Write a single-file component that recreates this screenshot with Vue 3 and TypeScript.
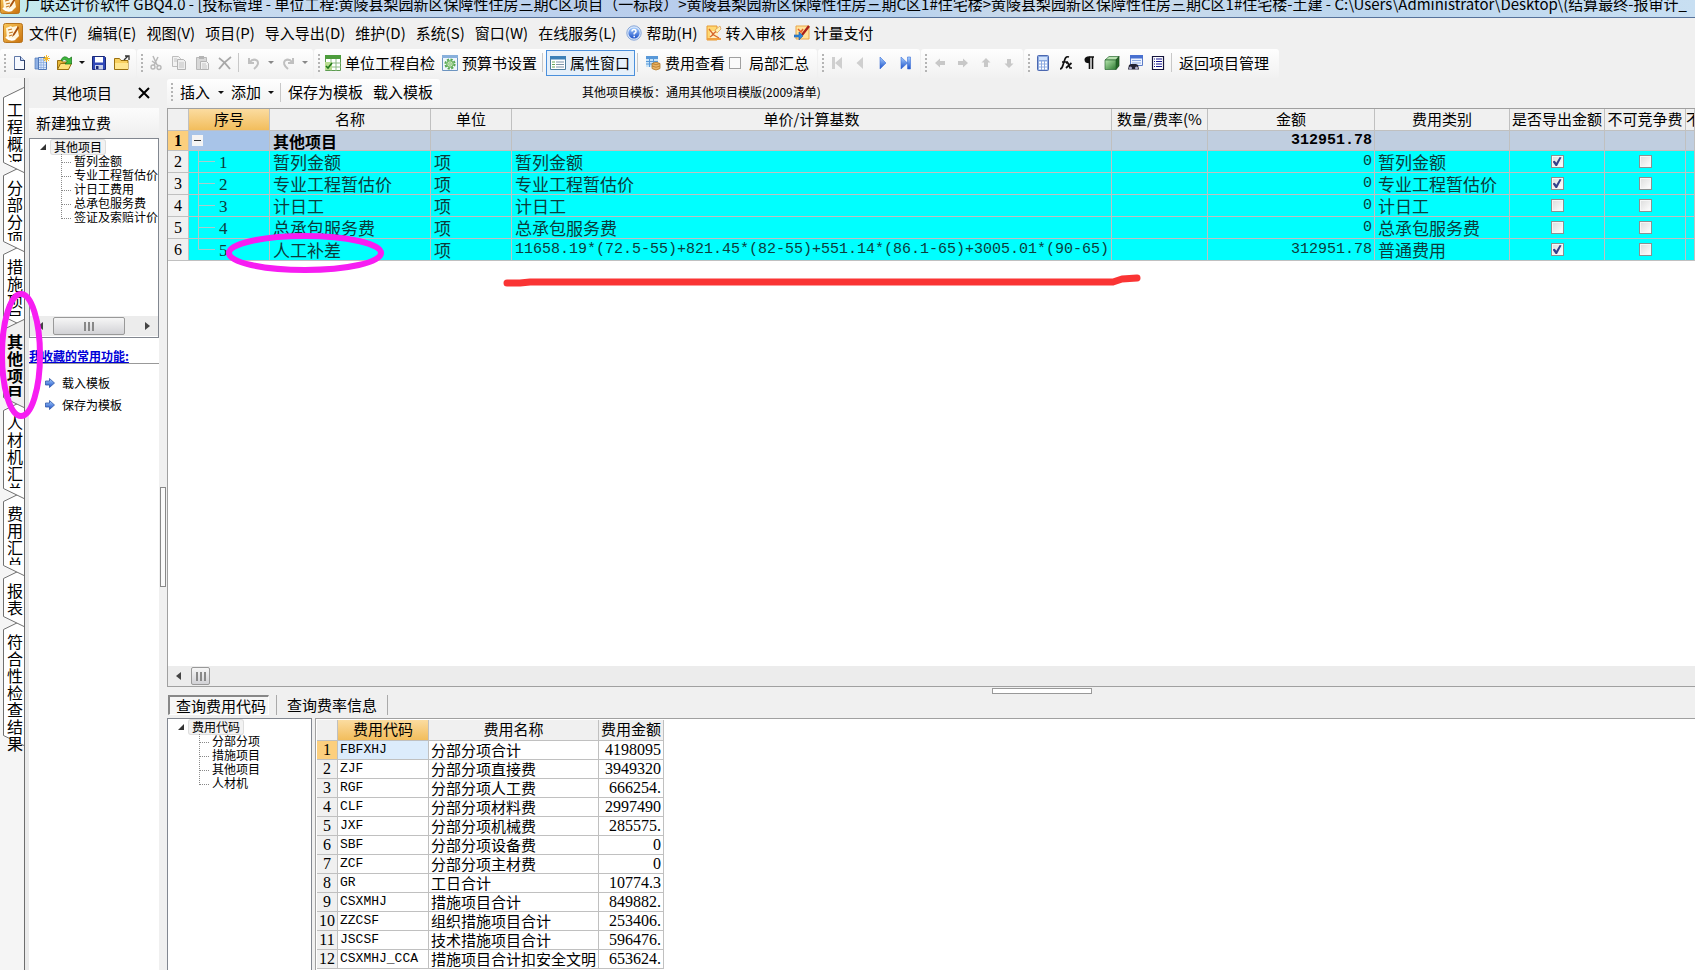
<script setup lang="ts">
import { reactive } from 'vue'

interface Tool { icon?: string; label?: string; kind?: 'sep' | 'caret' | 'check' | 'pressed'; name?: string; off?: boolean }
interface FeeRow { no: string; name: string; base: string; amount: string; type: string; exported: boolean; fixed: boolean }

const menus: { label: string; icon?: string }[] = [
  { label: '文件(F)' }, { label: '编辑(E)' }, { label: '视图(V)' }, { label: '项目(P)' },
  { label: '导入导出(D)' }, { label: '维护(D)' }, { label: '系统(S)' }, { label: '窗口(W)' },
  { label: '在线服务(L)' }, { label: '帮助(H)', icon: 'i-help' },
  { label: '转入审核', icon: 'i-audit' }, { label: '计量支付', icon: 'i-pay' },
]

const groups: Tool[][] = [
  [
    { icon: 'i-new', name: '新建' }, { icon: 'i-sheets', name: '新建工程' }, { icon: 'i-open', name: '打开' },
    { kind: 'caret', name: '最近文件' }, { icon: 'i-save', name: '保存' }, { icon: 'i-folder', name: '关闭' },
  ],
  [
    { icon: 'i-cut', name: '剪切', off: true }, { icon: 'i-copy', name: '复制', off: true },
    { icon: 'i-paste', name: '粘贴', off: true }, { icon: 'i-del', name: '删除', off: true }, { kind: 'sep' },
    { icon: 'i-undo', name: '撤销', off: true }, { kind: 'caret', name: '撤销列表', off: true },
    { icon: 'i-redo', name: '恢复', off: true }, { kind: 'caret', name: '恢复列表', off: true },
  ],
  [
    { icon: 'i-selfcheck', label: '单位工程自检' }, { icon: 'i-setting', label: '预算书设置' }, { kind: 'sep' },
    { icon: 'i-props', label: '属性窗口', kind: 'pressed' }, { kind: 'sep' },
    { icon: 'i-fee', label: '费用查看' }, { kind: 'check', label: '局部汇总' },
  ],
  [
    { icon: 'i-first', name: '首条', off: true }, { icon: 'i-prev', name: '上一条', off: true },
    { icon: 'i-next', name: '下一条' }, { icon: 'i-last', name: '末条' },
  ],
  [
    { icon: 'i-left', name: '左移', off: true }, { icon: 'i-right', name: '右移', off: true },
    { icon: 'i-up', name: '上移', off: true }, { icon: 'i-down', name: '下移', off: true },
  ],
  [
    { icon: 'i-calc', name: '计算器' }, { icon: 'i-fx', name: '函数' }, { icon: 'i-para', name: '特殊符号' },
    { icon: 'i-cube', name: '图元' }, { icon: 'i-find', name: '查找' }, { icon: 'i-list', name: '列表' },
    { kind: 'sep' }, { label: '返回项目管理' },
  ],
]

const rail = [
  { text: '工程概况', h: 86 }, { text: '分部分项', h: 87 }, { text: '措施项目', h: 83 },
  { text: '其他项目', h: 89, active: true }, { text: '人材机汇总', h: 99 }, { text: '费用汇总', h: 85 },
  { text: '报表', h: 59 }, { text: '符合性检查结果', h: 127, open: true },
]
const tabPath = (h: number) => `M24 .5L3.5 10.5V${h - 10.5}L24 ${h - 0.5}`

const sideTree = ['暂列金额', '专业工程暂估价', '计日工费用', '总承包服务费', '签证及索赔计价']
const codeTree = ['分部分项', '措施项目', '其他项目', '人材机']
const favourites = ['载入模板', '保存为模板']

const rows = reactive<FeeRow[]>([
  { no: '1', name: '暂列金额', base: '暂列金额', amount: '0', type: '暂列金额', exported: true, fixed: false },
  { no: '2', name: '专业工程暂估价', base: '专业工程暂估价', amount: '0', type: '专业工程暂估价', exported: true, fixed: false },
  { no: '3', name: '计日工', base: '计日工', amount: '0', type: '计日工', exported: false, fixed: false },
  { no: '4', name: '总承包服务费', base: '总承包服务费', amount: '0', type: '总承包服务费', exported: false, fixed: false },
  { no: '5', name: '人工补差', base: '11658.19*(72.5-55)+821.45*(82-55)+551.14*(86.1-65)+3005.01*(90-65)', amount: '312951.78', type: '普通费用', exported: true, fixed: false },
])

const codes: [string, string, string][] = [
  ['FBFXHJ', '分部分项合计', '4198095'], ['ZJF', '分部分项直接费', '3949320'],
  ['RGF', '分部分项人工费', '666254.'], ['CLF', '分部分项材料费', '2997490'],
  ['JXF', '分部分项机械费', '285575.'], ['SBF', '分部分项设备费', '0'],
  ['ZCF', '分部分项主材费', '0'], ['GR', '工日合计', '10774.3'],
  ['CSXMHJ', '措施项目合计', '849882.'], ['ZZCSF', '组织措施项目合计', '253406.'],
  ['JSCSF', '技术措施项目合计', '596476.'], ['CSXMHJ_CCA', '措施项目合计扣安全文明', '653624.'],
]
</script>

<template>
  <div class="app">
    <svg class="defs" aria-hidden="true">
      <defs>
        <linearGradient id="gold" x2="1" y2="1"><stop offset="0" stop-color="#fbc95a" /><stop offset="1" stop-color="#c8700c" /></linearGradient>
        <linearGradient id="blue" x2="0" y2="1"><stop offset="0" stop-color="#a8d0ff" /><stop offset="1" stop-color="#1c50c8" /></linearGradient>
        <linearGradient id="green" x2="1" y2="1"><stop offset="0" stop-color="#b8e8b0" /><stop offset="1" stop-color="#2c7a30" /></linearGradient>
      </defs>
      <symbol id="i-app" viewBox="0 0 20 20"><rect x=".5" y=".5" width="19" height="19" rx="2" fill="url(#gold)" stroke="#b8741c" /><path d="M3 5l5-2 1 1 5-1 2 10-4 4-8-1z" fill="#fff6dc" /><path d="M5 7l4-1M6 10l4-1M6 13l3-1" fill="none" stroke="#c87820" stroke-width="1.200" /><path d="M15 3L10 11l-1 3 2.500-2L16 5z" fill="#a8500c" /><path d="M3 14q4 4 9 2" fill="none" stroke="#fff" stroke-width="2" /></symbol>
      <symbol id="i-help" viewBox="0 0 16 16"><circle cx="8" cy="8" r="7.2" fill="#d8e6fa" stroke="#8aa8d8" /><circle cx="8" cy="8" r="5.6" fill="url(#blue)" /><path d="M6 6.4Q6 4.4 8 4.4T10 6.4Q10 7.4 8.2 8.4V9.6M8.2 10.8v1.4" fill="none" stroke="#fff" stroke-width="1.5" /></symbol>
      <symbol id="i-audit" viewBox="0 0 16 16"><path d="M1 1h10v14H1z" fill="#ffd873" stroke="#e89a30" /><path d="M1 13h14v2H1z" fill="#f0a040" /><path d="M4 6h8v7H4z" fill="#fff0c0" /><path d="M3 4l4 5 7-6M6 9l7 4M4 12l4-3" fill="none" stroke="#d8682c" stroke-width="1.400" /><path d="M9 5l5-4 1 3-4 4z" fill="#fff0b0" stroke="#d88838" stroke-width=".6" /></symbol>
      <symbol id="i-pay" viewBox="0 0 16 16"><path d="M2 1h13v13H2z" fill="#ffe29a" stroke="#eaa648" /><path d="M4 4l3 3 2-3" fill="none" stroke="#e8602c" stroke-width="1.5" /><path d="M15 1L8 10" stroke="#a82018" stroke-width="2.4" /><path d="M0 10h5V7l4 4-4 4v-3H0z" fill="#2f86d8" stroke="#1c5ca8" stroke-width=".6" /></symbol>
      <symbol id="i-new" viewBox="0 0 16 16"><path d="M3.5 1.5h6l4 4v9h-10z" fill="#f6f9ff" stroke="#6078a8" /><path d="M9.500 1.500v4h4" fill="#c4d4f0" stroke="#3c5488" /><path d="M13.500 5v9.500h-10" fill="none" stroke="#2c3c60" /></symbol>
      <symbol id="i-sheets" viewBox="0 0 16 16"><path d="M1 3h4v11H1z" fill="#8eb0e4" stroke="#5078b8" stroke-width=".7" /><path d="M4.500 2.500h8v12h-8z" fill="#d8e8fc" stroke="#5078b8" /><path d="M5 5h7M5 7.500h7M5 10h7M5 12.500h7M7 3v11M9.500 3v11" stroke="#86a8dc" stroke-width=".7" /><path d="M12.500 0v7M9 3.500h7M10 1l5 5M15 1l-5 5" stroke="#f4b828" stroke-width="1" /></symbol>
      <symbol id="i-open" viewBox="0 0 16 16"><path d="M.500 14.500v-9h4l1 1.500h6v7.500z" fill="#e8b838" stroke="#9a7010" /><path d="M.500 14.500l3-6h11l-3 6z" fill="#ffe27c" stroke="#9a7010" /><path d="M4 5Q7-1 12 4l2.500-2V9H8l2-2.500Q8 3 5 6z" fill="#3cb83c" stroke="#147014" stroke-width=".7" /></symbol>
      <symbol id="i-save" viewBox="0 0 16 16"><path d="M1.500 1.500h12l1 1v12h-13z" fill="#3048b8" stroke="#182878" /><path d="M4 2h8v5.500H4z" fill="#fff" /><path d="M4 10h8v4.500H4z" fill="#c8d0e8" /><path d="M5 11h2.500v3H5z" fill="#182878" /></symbol>
      <symbol id="i-folder" viewBox="0 0 16 16"><path d="M.500 14.500v-11h5l1.500 2h7v9z" fill="#f8d060" stroke="#9a7010" /><path d="M1 8h13v6H1z" fill="#ffe690" /><path d="M10 5l4-4M11 1h4v4" fill="none" stroke="#333" stroke-width="1.300" /></symbol>
      <symbol id="i-cut" viewBox="0 0 16 16"><path d="M5 1l4 9M10 2L6 10M4 6l7 5" fill="none" stroke="#b8b8b8" stroke-width="1.500" /><circle cx="5" cy="12" r="2" fill="none" stroke="#b8b8b8" stroke-width="1.400" /><circle cx="11" cy="12.500" r="2" fill="none" stroke="#b8b8b8" stroke-width="1.400" /></symbol>
      <symbol id="i-copy" viewBox="0 0 16 16"><path d="M1.500 1.500h6l2 2v8h-8z" fill="#f2f2f2" stroke="#bdbdbd" /><path d="M6.500 4.500h6l2 2v8h-8z" fill="#eee" stroke="#b4b4b4" /><path d="M8 8h5M8 10h5M8 12h5M3 4h3M3 6h3" stroke="#c4c4c4" /></symbol>
      <symbol id="i-paste" viewBox="0 0 16 16"><path d="M2.500 2.500h10v12h-10z" fill="#d8d8d8" stroke="#b8b8b8" /><path d="M5 1h5v3H5z" fill="#b4b4b4" /><path d="M6.500 6.500h6l2 2v6h-8z" fill="#f2f2f2" stroke="#b4b4b4" /><path d="M8 9h4M8 11h5M8 13h5" stroke="#c4c4c4" /></symbol>
      <symbol id="i-del" viewBox="0 0 16 16"><path d="M2 3Q8 7 13 14M14 2Q7 7 2 14" fill="none" stroke="#a8a8a8" stroke-width="1.800" /></symbol>
      <symbol id="i-undo" viewBox="0 0 16 16"><path d="M3 3v5h5M3.500 7.500Q7 3 11 5.500Q14 9 8 14" fill="none" stroke="#c0c0c0" stroke-width="2" /></symbol>
      <symbol id="i-redo" viewBox="0 0 16 16"><path d="M13 3v5H8M12.500 7.500Q9 3 5 5.500Q2 9 8 14" fill="none" stroke="#c0c0c0" stroke-width="2" /></symbol>
      <symbol id="i-selfcheck" viewBox="0 0 16 16"><path d="M.500.500h15v15H.500z" fill="#fff" stroke="#5c9c50" /><path d="M0 0h16v4H0z" fill="#4c9c3c" /><path d="M0 8h16M0 12h16M6 4v12M11 4v12" stroke="#8cb884" /><path d="M0 7h7v8H0z" fill="#b8dc90" /><path d="M1 11l2 2 4-5" fill="none" stroke="#207818" stroke-width="1.600" /></symbol>
      <symbol id="i-setting" viewBox="0 0 16 16"><path d="M.500.500h15v15H.500z" fill="#eef6fc" stroke="#6c94c0" /><path d="M0 0h16v3H0z" fill="#88b0dc" /><circle cx="8" cy="9" r="4.600" fill="none" stroke="#58a850" stroke-width="2" stroke-dasharray="2.200 1.400" /><circle cx="8" cy="9" r="3.300" fill="#c8e8b8" stroke="#58a850" /><circle cx="8" cy="9" r="1.200" fill="#fff" stroke="#58a850" stroke-width=".7" /></symbol>
      <symbol id="i-props" viewBox="0 0 16 16"><path d="M.500 1.500h15v13H.500z" fill="#fff" stroke="#4c7c9c" /><path d="M0 1h16v3.500H0z" fill="#3c80b8" /><path d="M2 7h3M2 9.500h3M2 12h3" stroke="#68a858" stroke-width="1.200" /><path d="M6 7h8M6 9.500h8M6 12h8" stroke="#7c94a8" /></symbol>
      <symbol id="i-fee" viewBox="0 0 16 16"><path d="M1 1h12v11H1z" fill="#c8e4f8" /><path d="M1 1h12v3H1z" fill="#5898d8" /><path d="M1 6.500h12M1 9h12M4.500 3v9M8.500 3v9" stroke="#5898d8" /><path d="M7 8.500v5q4 3 8 0v-5q-4-2.500-8 0z" fill="#eab468" /><path d="M7 8.500q4 2.500 8 0q-4-2.500-8 0v5q4 3 8 0v-5M7 11q4 2.500 8 0" fill="none" stroke="#b07828" stroke-width=".8" /></symbol>
      <symbol id="i-first" viewBox="0 0 16 16"><path d="M3 2h3v12H3zM13 2v12L6 8z" fill="#cfcfcf" /></symbol>
      <symbol id="i-prev" viewBox="0 0 16 16"><path d="M11 2v12L4.500 8z" fill="#cfcfcf" /></symbol>
      <symbol id="i-next" viewBox="0 0 16 16"><path d="M5 2v12l6-6z" fill="url(#blue)" stroke="#3c70d8" stroke-width=".6" /></symbol>
      <symbol id="i-last" viewBox="0 0 16 16"><path d="M3 2v12l6.500-6zM9.500 2h3v12h-3z" fill="url(#blue)" stroke="#3c70d8" stroke-width=".6" /></symbol>
      <symbol id="i-left" viewBox="0 0 16 16"><path d="M3 8l5-4.500V6h5v4H8v2.500z" fill="#c8c8c8" /></symbol>
      <symbol id="i-right" viewBox="0 0 16 16"><path d="M13 8L8 3.500V6H3v4h5v2.500z" fill="#c8c8c8" /></symbol>
      <symbol id="i-up" viewBox="0 0 16 16"><path d="M8 3L3.500 7.500H6V12h4V7.500h2.500z" fill="#c8c8c8" /></symbol>
      <symbol id="i-down" viewBox="0 0 16 16"><path d="M8 13L3.500 8.500H6V4h4v4.500h2.500z" fill="#c8c8c8" /></symbol>
      <symbol id="i-calc" viewBox="0 0 16 16"><rect x="2.500" y=".5" width="11" height="15" rx="1" fill="#8caae0" stroke="#4c68b0" /><path d="M4 2h8v3H4z" fill="#d0e2fc" /><path d="M4 7.500h8M4 10.500h8M4 13.500h8" stroke="#fff" stroke-width="1.800" stroke-dasharray="2 1" /></symbol>
      <symbol id="i-fx" viewBox="0 0 16 16"><path d="M2 14q2 0 3-4l2-6q1-3 4-2M4 7h6M8 8l2 0 2 5h2M13.500 8L8 13" fill="none" stroke="#111" stroke-width="1.700" /></symbol>
      <symbol id="i-para" viewBox="0 0 16 16"><path d="M8 2H13M8.500 2v12M11.500 2v12" stroke="#111" stroke-width="1.600" /><path d="M8.500 1.200Q3.500 1.200 3.500 4.800T8.500 8.300z" fill="#111" /></symbol>
      <symbol id="i-cube" viewBox="0 0 16 16"><path d="M1 5l4-3.500h10L12 5z" fill="#b8e0b0" stroke="#286830" stroke-width=".7" /><path d="M12 5l3-3.500V11l-3 3.500z" fill="#246828" stroke="#184818" stroke-width=".7" /><path d="M1 5h11v9.500H1z" fill="url(#green)" stroke="#286830" stroke-width=".7" /></symbol>
      <symbol id="i-find" viewBox="0 0 16 16"><path d="M3.500.500h12v10h-12z" fill="#eef4ff" stroke="#5c7cc8" /><path d="M3 0h13v3.500H3z" fill="#4870d0" /><path d="M5 5.500h9M5 8h9" stroke="#8ca8e0" /><path d="M1 14.500l1-4.500 2-1h5l2 1 1 4.500z" fill="#223" /><circle cx="3.500" cy="13" r="1.500" fill="#aac" /><circle cx="9.500" cy="13" r="1.500" fill="#aac" /></symbol>
      <symbol id="i-list" viewBox="0 0 16 16"><path d="M2.500 1.500h11v13h-11z" fill="#fff" stroke="#14143c" stroke-width="1.200" /><path d="M6 4h6M6 6.500h6M6 9h6M6 11.500h6M4 4h1M4 6.500h1M4 9h1M4 11.500h1" stroke="#14148c" stroke-width="1.200" /></symbol>
      <symbol id="i-go" viewBox="0 0 10 10"><path d="M.500 3h4V.500L9.500 5l-5 4.500V7h-4z" fill="url(#blue)" stroke="#3058a8" stroke-width=".8" /></symbol>
    </svg>

    <header class="title">
      <svg class="logo"><use href="#i-app" /></svg>
      <h1>广联达计价软件 GBQ4.0 - [投标管理 - 单位工程:黄陵县梨园新区保障性住房三期C区项目（一标段）&gt;黄陵县梨园新区保障性住房三期C区1#住宅楼&gt;黄陵县梨园新区保障性住房三期C区1#住宅楼-土建 - C:\Users\Administrator\Desktop\(结算最终-报审计_</h1>
    </header>

    <nav class="menu">
      <svg class="logo"><use href="#i-app" /></svg>
      <button v-for="m in menus" :key="m.label" type="button">
        <svg v-if="m.icon" class="ico"><use :href="'#' + m.icon" /></svg>{{ m.label }}
      </button>
    </nav>

    <div class="bars">
      <div v-for="(g, gi) in groups" :key="gi" class="bar">
        <i class="grip"></i>
        <template v-for="(t, ti) in g" :key="ti">
          <i v-if="t.kind === 'sep'" class="sep"></i>
          <button v-else-if="t.kind === 'caret'" type="button" class="drop" :class="{ off: t.off }" :aria-label="t.name"><i class="caret"></i></button>
          <label v-else-if="t.kind === 'check'" class="partial"><input type="checkbox" />{{ t.label }}</label>
          <button v-else-if="t.label" type="button" class="wide" :class="{ pressed: t.kind === 'pressed' }">
            <svg v-if="t.icon" class="ico"><use :href="'#' + t.icon" /></svg>{{ t.label }}
          </button>
          <button v-else type="button" class="tool" :aria-label="t.name"><svg class="ico"><use :href="'#' + t.icon" /></svg></button>
        </template>
      </div>
    </div>

    <div class="body">
      <nav class="rail">
        <button v-for="(r, i) in rail" :key="r.text" type="button" :class="{ active: r.active, open: r.open }" :style="{ height: r.h + 'px', zIndex: r.active ? 20 : 10 - i }">
          <svg :height="r.h" width="25"><path :d="tabPath(r.h)" /></svg>
          <span>{{ r.text }}</span>
        </button>
      </nav>

      <aside class="side">
        <div class="side-head"><h2>其他项目</h2><button type="button" aria-label="关闭"><svg width="12" height="12"><path d="M1 1l10 10M11 1L1 11" stroke="#000" stroke-width="2" /></svg></button></div>
        <button type="button" class="new-fee">新建独立费</button>
        <div class="side-tree">
          <div class="tree">
            <div class="root"><i class="tri"></i><button type="button">其他项目</button></div>
            <ul><li v-for="s in sideTree" :key="s">{{ s }}</li></ul>
          </div>
          <div class="hscroll">
            <i class="arrow l"></i><i class="thumb"><b></b></i><i class="arrow r"></i>
          </div>
        </div>
        <h3>我收藏的常用功能:</h3>
        <ul class="fav">
          <li v-for="f in favourites" :key="f"><svg><use href="#i-go" /></svg><a href="#">{{ f }}</a></li>
        </ul>
      </aside>

      <div class="vsplit"><i></i></div>

      <main class="content">
        <div class="sub">
          <div class="bar">
            <i class="grip"></i>
            <button type="button" class="text">插入</button><button type="button" class="drop" aria-label="插入选项"><i class="caret"></i></button>
            <button type="button" class="text">添加</button><button type="button" class="drop" aria-label="添加选项"><i class="caret"></i></button>
            <i class="sep"></i>
            <button type="button" class="text">保存为模板</button><button type="button" class="text">载入模板</button>
          </div>
          <p>其他项目模板：通用其他项目模版(2009清单)</p>
        </div>

        <section class="grid">
          <table>
            <colgroup><col class="w-num"><col class="w-seq"><col class="w-name"><col class="w-unit"><col><col class="w-qty"><col class="w-amt"><col class="w-type"><col class="w-exp"><col class="w-fix"><col class="w-tail"></colgroup>
            <thead>
              <tr><th></th><th class="sel">序号</th><th>名称</th><th>单位</th><th>单价/计算基数</th><th>数量/费率(%</th><th>金额</th><th>费用类别</th><th>是否导出金额</th><th>不可竞争费</th><th class="cut">不</th></tr>
            </thead>
            <tbody>
              <tr class="sum">
                <th scope="row">1</th>
                <td class="seq"><button type="button" aria-label="折叠"></button></td>
                <td>其他项目</td><td></td><td></td><td></td><td class="num">312951.78</td><td></td><td></td><td></td><td></td>
              </tr>
              <tr v-for="(r, i) in rows" :key="r.no">
                <th scope="row">{{ i + 2 }}</th>
                <td class="seq"><div><svg width="17" height="22"><path :d="i === rows.length - 1 ? 'M.5 0V10.500H17' : 'M.5 0V22M.5 10.500H17'" /></svg>{{ r.no }}</div></td>
                <td>{{ r.name }}</td><td>项</td>
                <td :class="{ mono: i === 4 }">{{ r.base }}</td><td></td>
                <td class="num">{{ r.amount }}</td><td>{{ r.type }}</td>
                <td class="box"><input v-model="r.exported" type="checkbox" :aria-label="r.name + ' 是否导出金额'" /></td>
                <td class="box"><input v-model="r.fixed" type="checkbox" :aria-label="r.name + ' 不可竞争费'" /></td>
                <td></td>
              </tr>
            </tbody>
          </table>
          <div class="hscroll"><i class="arrow l"></i><i class="thumb"><b></b></i></div>
        </section>

        <div class="hsplit"><i></i></div>

        <div class="tabs"><button type="button" class="on">查询费用代码</button><button type="button">查询费率信息</button></div>

        <section class="lower">
          <div class="tree code-tree">
            <div class="root"><i class="tri"></i><button type="button">费用代码</button></div>
            <ul><li v-for="s in codeTree" :key="s">{{ s }}</li></ul>
          </div>
          <div class="codes">
            <table>
              <colgroup><col class="c-num"><col class="c-code"><col class="c-name"><col class="c-amt"></colgroup>
              <thead><tr><th></th><th class="sel">费用代码</th><th>费用名称</th><th>费用金额</th></tr></thead>
              <tbody>
                <tr v-for="(c, i) in codes" :key="c[0]">
                  <th scope="row">{{ i + 1 }}</th><td class="mono">{{ c[0] }}</td><td>{{ c[1] }}</td><td class="num">{{ c[2] }}</td>
                </tr>
              </tbody>
            </table>
          </div>
        </section>
      </main>
    </div>

    <svg class="marks" aria-hidden="true">
      <ellipse cx="21" cy="355" rx="19" ry="61" stroke="#f71df2" stroke-width="6" />
      <ellipse cx="305" cy="253" rx="76" ry="17" stroke="#f71df2" stroke-width="6" />
      <path d="M507 283L520 283L530 282H1113L1122 279L1137 278" stroke="#fa3434" stroke-width="7" stroke-linecap="round" stroke-linejoin="round" />
    </svg>
  </div>
</template>

<style>
body { margin: 0; overflow: hidden; }
</style>

<style scoped>
* { box-sizing: border-box; }
.app { position: relative; display: flex; flex-direction: column; height: 100vh; overflow: hidden; background: #f0f0f0; color: #000; font: 15px/20px "Noto Sans CJK SC", sans-serif; }
.defs { position: absolute; width: 0; height: 0; }
.marks { position: absolute; inset: 0; width: 100%; height: 100%; fill: none; pointer-events: none; z-index: 50; }
button { margin: 0; padding: 0; border: 0; background: none; color: inherit; font: inherit; white-space: nowrap; }
h1, h2, h3, p, ul { margin: 0; padding: 0; font-weight: 400; list-style: none; }
svg { display: block; flex: none; }
i { font-style: normal; }
.logo { width: 20px; height: 20px; }
.ico { width: 16px; height: 16px; }

.title { flex: none; display: flex; align-items: flex-end; gap: 5px; height: 18px; overflow: hidden; border-bottom: 1px solid #56729a; background: linear-gradient(90deg, #c4ecec 0, #c8dcf0 12%, #b8cdec 40%, #b4d0ee 52%, #cfdcea 62%, #bcd6ee 80%, #c8dff2 100%); }
.title .logo { margin-bottom: 3px; }
.title h1 { height: 25px; font-size: 15px; line-height: 24px; white-space: nowrap; }

.menu { flex: none; display: flex; align-items: center; gap: 10px; height: 31px; padding-left: 3px; padding-bottom: 1px; }
.menu .logo { margin-right: -4px; }
.menu button { display: flex; align-items: center; gap: 4px; }
.menu button:has(.ico) { margin-right: -2px; }

.bars { flex: none; display: flex; gap: 1px; height: 29px; }
.bar { flex: none; display: flex; align-items: center; height: 29px; padding: 0 3px 2px 0; border-radius: 3px; background: linear-gradient(#fefefe, #f1f1f1); }
.bars .bar:nth-child(3) { padding-right: 8px; }
.bars .bar:last-child { padding-right: 7px; }
.grip { flex: none; width: 2px; height: 18px; margin: 0 1px 0 4px; background: repeating-linear-gradient(#b4b4b4 0 2px, transparent 2px 4px); }
.tool { display: grid; place-items: center; width: 23px; height: 26px; }
.drop { display: grid; place-items: center; width: 11px; height: 26px; }
.caret { border: 3px solid transparent; border-top-color: #111; border-bottom: 0; }
.off .caret { border-top-color: #888; }
.sep { flex: none; width: 1px; height: 19px; margin: 0 3px 0 2px; background: #c8c8c8; }
.wide { display: flex; align-items: center; gap: 4px; height: 26px; padding: 0 3px 0 4px; }
.wide.pressed { padding: 0 4px 0 3px; border: 1px solid #4b90dc; background: #e6f0fa; }
.partial { display: flex; align-items: center; gap: 8px; padding-left: 1px; }
.partial input { appearance: none; width: 12px; height: 12px; margin: 0; border: 1px solid #a0a0a0; background: #fafafa; }

.body { flex: 1; min-height: 0; display: flex; }
.rail { flex: none; display: flex; flex-direction: column; width: 25px; padding-top: 9px; border-right: 1px solid #6e6e6e; background: #f5f5f5; }
.rail button { flex: none; display: grid; position: relative; width: 25px; margin-bottom: -8px; text-align: left; }
.rail svg, .rail span { grid-area: 1 / 1; }
.rail path { fill: #fff; stroke: #707070; }
.rail span { z-index: 1; width: 17px; margin: 14px 0 11px 7px; overflow: hidden; font-size: 16px; line-height: 17px; white-space: normal; word-break: break-all; }
.rail .active path { fill: #f0f0f0; }
.rail .active span { font-weight: 700; }
.rail .open span { margin-bottom: -8px; }

.side { flex: none; display: flex; flex-direction: column; width: 134px; padding-left: 4px; background: linear-gradient(90deg, #ebebeb 4px, #fff 4px); font-size: 12px; line-height: 14px; }
.side-head { display: flex; justify-content: space-between; align-items: center; height: 30px; padding: 0 9px 1px 23px; background: #f0f0f0; }
.side-head h2 { font-size: 15px; line-height: 20px; }
.new-fee { height: 30px; padding-left: 7px; background: linear-gradient(#fcfcfc, #eee); font-size: 15px; text-align: left; }
.side-tree { display: flex; flex-direction: column; height: 200px; padding-bottom: 1px; border: 1px solid #828790; background: #fff; }
.side-tree .tree { flex: 1; padding-left: 10px; overflow: hidden; }
.side-tree .hscroll { gap: 10px; }
.side-tree .thumb { width: 72px; }
.side h3 { margin-top: 11px; border-bottom: 1px solid #999; color: #0000d8; font-size: 12px; font-weight: 700; line-height: 14px; text-decoration: underline; }
.fav { padding: 8px 0 0 16px; }
.fav li { display: flex; align-items: center; gap: 7px; height: 22px; }
.fav svg { width: 10px; height: 10px; }
.fav a { color: inherit; text-decoration: none; }

.tree { font-size: 12px; line-height: 14px; white-space: nowrap; }
.root { display: flex; align-items: center; gap: 5px; height: 15px; }
.root button { padding: 0 3px; border-radius: 2px; background: #f2f2f2; box-shadow: 0 0 0 1px #ddd; line-height: 14px; }
.tri { width: 0; height: 0; border: 3px solid transparent; border-right-color: #333; border-bottom-color: #333; }
.tree ul { padding-left: 21px; }
.tree li { display: flex; height: 14px; }
.tree li::before { content: ""; flex: none; width: 9px; height: 8px; margin-right: 3px; border-left: 1px dotted #888; border-bottom: 1px dotted #888; }
.tree li:not(:last-child) { background: repeating-linear-gradient(#999 0 1px, transparent 1px 2px) 0 0 / 1px 14px no-repeat; }

.hscroll { flex: none; display: flex; align-items: center; height: 20px; padding: 0 8px; background: #ececec; }
.arrow { border: 4px solid transparent; }
.arrow.l { border-right: 5px solid #444; border-left: 0; }
.arrow.r { margin-left: auto; border-left: 5px solid #444; border-right: 0; }
.thumb { display: grid; flex: none; place-items: center; height: 18px; border: 1px solid #999; border-radius: 2px; background: linear-gradient(#f6f6f6, #d2d2d6); }
.thumb b { width: 10px; height: 9px; background: repeating-linear-gradient(90deg, #888 0 2px, transparent 2px 4px); }

.vsplit { flex: none; display: flex; align-items: center; width: 8px; }
.vsplit i { width: 6px; height: 100px; margin: 26px 0 0 1px; border: 1px solid #888; background: #fafafa; }

.content { flex: 1; min-width: 0; display: flex; flex-direction: column; }
.sub { flex: none; display: flex; align-items: center; height: 30px; }
.sub .bar { width: 273px; }
.sub .grip { margin: 0 3px 0 4px; }
.sub .text { padding: 0 4px; }
.sub .drop { width: 14px; }
.sub .bar .sep + .text { margin-right: 2px; }
.sub p { margin-left: 142px; padding-bottom: 2px; font-size: 12px; }

table { border-spacing: 0; table-layout: fixed; }
th, td { padding: 0; overflow: hidden; border-right: 1px solid #c0c0c0; border-bottom: 1px solid #c0c0c0; font-weight: 400; text-align: left; white-space: nowrap; }
thead th { background: #f0f0f0; text-align: center; }
thead .sel { background: linear-gradient(#fbdca0, #f2bd5c); }
tbody th { background: #f0f0f0; font: 16px/18px "Liberation Serif", serif; text-align: center; }
.num { text-align: right; }

.grid { flex: 1; min-height: 0; display: flex; flex-direction: column; border: 1px solid #a0a0a0; border-right: 0; background: #fff; }
.grid table { width: 100%; margin-bottom: auto; }
.w-num { width: 21px; } .w-seq { width: 81px; } .w-name { width: 161px; } .w-unit { width: 81px; } .w-qty { width: 96px; }
.w-amt { width: 167px; } .w-type { width: 135px; } .w-exp { width: 95px; } .w-fix { width: 81px; } .w-tail { width: 9px; }
.grid thead th { height: 22px; padding-bottom: 2px; line-height: 18px; }
.grid thead .cut { text-align: left; }
.grid tbody td { height: 22px; padding: 0 3px; background: #0ff; font-size: 17px; line-height: 20px; color: #0c3c3c; }
.grid tbody .num, .grid tbody .mono { padding-top: 1px; font-family: "Liberation Mono", monospace; font-size: 15px; }
.grid tbody .num { padding-right: 2px; }
.grid tbody .seq { padding-left: 9px; font-family: "Liberation Serif", serif; }
.seq div { display: flex; height: 21px; gap: 4px; line-height: 23px; }
.seq path { fill: none; stroke: #a8cccc; }
.grid .sum th { background: #fccf7e; font-weight: 700; }
.grid .sum td { height: 20px; background: #c0cee0; color: #000; font-size: 16px; font-weight: 700; line-height: 18px; }
.grid .sum .seq { padding-left: 3px; background: #a8c4e8; }
.grid .sum .num { font-size: 15px; }
.sum button { display: grid; place-items: center; width: 11px; height: 11px; background: #f4f4f4; }
.sum button::before { content: ""; width: 7px; height: 1px; background: #333; }
.box input { display: block; appearance: none; width: 13px; height: 13px; margin: 0 auto; border: 1px solid #8c9090; background: linear-gradient(135deg, #dcdcdc, #fff); box-shadow: inset 0 0 0 1px #f6f6f6; }
.box input:checked::before { content: ""; display: block; width: 9px; height: 9px; margin: 1px; background: #34418c; clip-path: polygon(0 50%, 25% 42%, 42% 65%, 80% 0, 100% 5%, 50% 100%, 35% 100%); }
.grid > .hscroll { gap: 10px; }
.grid > .hscroll .thumb { width: 19px; }

.hsplit { flex: none; display: flex; height: 8px; }
.hsplit i { width: 100px; height: 6px; margin: 1px auto 0 54%; border: 1px solid #999; background: #fff; }

.tabs { flex: none; display: flex; gap: 7px; height: 23px; padding-left: 1px; }
.tabs button { height: 20px; padding: 0 10px; border-right: 1px solid #aaa; border-left: 1px solid #aaa; line-height: 20px; }
.tabs .on { width: 101px; padding: 0 0 0 6px; border: 1px solid #fff; border-top: 2px solid #888; border-left: 2px solid #888; background: #f6f6f6; line-height: 18px; text-align: left; }

.lower { flex: none; display: flex; gap: 3px; height: 252px; }
.code-tree { flex: none; width: 145px; padding-left: 10px; border: 1px solid #828790; border-bottom: 0; background: #fff; }
.codes { flex: 1; min-width: 0; padding: 1px 0 0 1px; overflow: hidden; border: 1px solid #a0a0a0; border-bottom: 0; border-right: 0; background: #fff; }
.codes table { width: 347px; }
.c-num { width: 21px; } .c-code { width: 91px; } .c-name { width: 170px; } .c-amt { width: 65px; }
.codes thead th { height: 21px; padding-bottom: 2px; line-height: 18px; }
.codes th, .codes td { height: 19px; line-height: 18px; }
.codes td { padding-left: 2px; }
.codes .mono { font-family: "Liberation Mono", monospace; font-size: 13px; }
.codes td.num { padding: 0 2px 0 0; font-family: "Liberation Serif", serif; font-size: 16px; }
.codes tbody tr:first-child th { background: #fccf7e; }
.codes tbody tr:first-child .mono { background: #dcecfc; }
</style>
